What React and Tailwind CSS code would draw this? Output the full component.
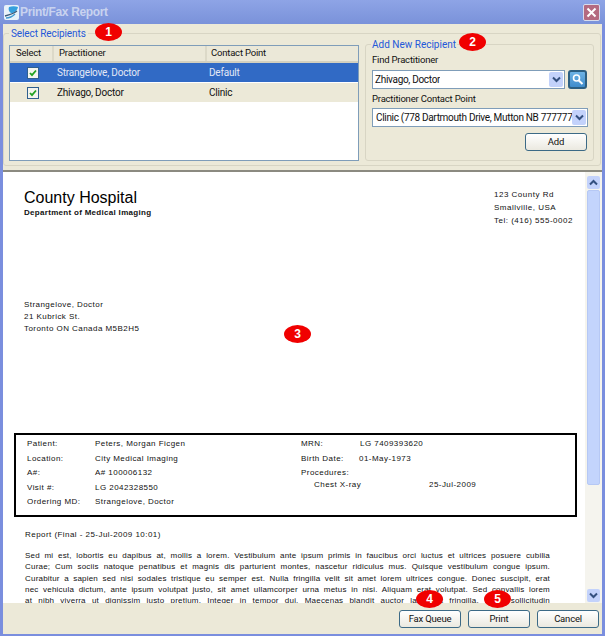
import React from 'react';

const Badge = ({ n, className }) => (
  <div className={`absolute w-[27px] h-[18px] rounded-[50%] bg-[#f00000] text-white text-[12px] font-bold flex items-center justify-center ${className}`}>
    {n}
  </div>
);

const Chevron = () => (
  <svg width="9" height="7" viewBox="0 0 9 7" fill="none">
    <path d="M1 1.5 L4.5 5 L8 1.5" stroke="#34507f" strokeWidth="2" />
  </svg>
);

const Combo = ({ text, className, textClass = 'tracking-[-0.3px]' }) => (
  <div className={`h-[19px] bg-white border border-[#7f9db9] flex items-center justify-between pl-[2px] pr-[1px] ${className}`}>
    <span className={`text-[10px] text-[#111] whitespace-nowrap overflow-hidden font-['Roboto',sans-serif] ${textClass}`}>{text}</span>
    <div className="w-[14px] h-[15px] shrink-0 rounded-[2px] bg-[#c3d2fb] flex items-center justify-center">
      <Chevron />
    </div>
  </div>
);

const XpButton = ({ label, className }) => (
  <button className={`h-[18px] rounded-[3px] border border-[#3c6a86] bg-gradient-to-b from-white to-[#ebe9e0] text-[9.5px] tracking-[-0.2px] text-[#111] font-['Roboto',sans-serif] ${className}`}>
    {label}
  </button>
);

const Check = () => (
  <div className="w-[12px] h-[12px] border border-[#2f5f8f] bg-[#f4f4ee] flex items-center justify-center">
    <svg width="8" height="8" viewBox="0 0 8 8" fill="none">
      <path d="M1 4 L3 6.2 L7 1.5" stroke="#21a121" strokeWidth="1.8" />
    </svg>
  </div>
);

const Row = ({ name, point, selected }) => (
  <div className={`h-[19px] flex items-center text-[10px] tracking-[-0.2px] ${selected ? 'bg-[#316ac5] text-[#e3e8f5]' : 'bg-[#ece9d8] text-[#111]'}`}>
    <div className="w-[47px] pl-[17px]"><Check /></div>
    <div className="w-[152px]">{name}</div>
    <div>{point}</div>
  </div>
);

const Field = ({ label, value, valueClass = 'w-[68px]' }) => (
  <div className="h-[14.5px] flex items-center">
    <span className={valueClass}>{label}</span>
    <span>{value}</span>
  </div>
);

const bodyLines = [
  'Sed mi est, lobortis eu dapibus at, mollis a lorem. Vestibulum ante ipsum primis in faucibus orci luctus et ultrices posuere cubilia',
  'Curae; Cum sociis natoque penatibus et magnis dis parturient montes, nascetur ridiculus mus. Quisque vestibulum congue ipsum.',
  'Curabitur a sapien sed nisi sodales tristique eu semper est. Nulla fringilla velit sit amet lorem ultrices congue. Donec suscipit, erat',
  'nec vehicula dictum, ante ipsum volutpat justo, sit amet ullamcorper urna metus in nisi. Aliquam erat volutpat. Sed convallis lorem',
  'at nibh viverra ut dignissim justo pretium. Integer in tempor dui. Maecenas blandit auctor lacus at fringilla. Nunc sollicitudin',
];

export default function App() {
  return (
    <div className="relative w-[605px] h-[636px] overflow-hidden flex flex-col bg-[#7a8ede] font-['Liberation_Sans',sans-serif]">
      {/* title bar */}
      <div className="h-[24px] shrink-0 bg-gradient-to-b from-[#8ea4e6] to-[#7a92da] flex items-center pl-[4px] pr-[5px]">
        <svg width="15" height="15" viewBox="0 0 15 15">
          <rect width="15" height="15" rx="2" fill="#e8f2fa" />
          <path d="M5 2 C8 1 11 1 14 2 C13 6 10 8 7 8 C5 7 4 4 5 2 Z" fill="#35a0dd" />
          <path d="M1 11 C5 10 9 9 13 6" stroke="#3c5a78" strokeWidth="1.4" fill="none" />
          <path d="M2 13 C6 13 9 11 11 9" stroke="#3f9ad0" strokeWidth="1.4" fill="none" />
        </svg>
        <span className="ml-[1px] text-[12px] font-bold text-[#c9d3ef] tracking-[-0.35px]">Print/Fax Report</span>
        <div className="ml-auto w-[17px] h-[17px] rounded-[2px] border border-[#d8dcec] bg-[#b46a80] flex items-center justify-center">
          <svg width="11" height="11" viewBox="0 0 11 11">
            <path d="M1.5 1.5 L9.5 9.5 M9.5 1.5 L1.5 9.5" stroke="#fff" strokeWidth="2" />
          </svg>
        </div>
      </div>

      <div className="flex-1 min-h-0 mx-[3px] mb-[2px] flex flex-col bg-[#ece9d8]">
        {/* recipients */}
        <div className="h-[148px] shrink-0 pt-[9px] border-b-2 border-[#8b8a80] font-['Roboto',sans-serif]">
          <div className="relative h-[133px] mr-[1px] border border-[#d8d5c4] rounded-[3px] flex pl-[5px] pt-[11px] pr-[6px]">
            <span className="absolute left-[5px] top-[-7px] px-[2px] bg-[#ece9d8] text-[10px] leading-[13px] tracking-[-0.1px] text-[#2458d8]">Select Recipients</span>

            <div className="w-[350px] h-[116px] border border-[#7f9db9] bg-white">
              <div className="h-[17px] flex items-center text-[9.5px] tracking-[-0.2px] text-[#111] bg-[#ebe8d8] border-b-2 border-[#d3d0bf]">
                <div className="w-[44px] pl-[6px] border-r-2 border-[#dcd9c8]">Select</div>
                <div className="w-[153px] pl-[5px] border-r-2 border-[#dcd9c8]">Practitioner</div>
                <div className="pl-[4px]">Contact Point</div>
              </div>
              <Row name="Strangelove, Doctor" point="Default" selected />
              <div className="h-[1px]" />
              <Row name="Zhivago, Doctor" point="Clinic" />
            </div>

            <div className="relative ml-[6px] mt-[-1px] w-[229px] h-[117px] border border-[#d8d5c4] rounded-[3px] px-[6px] pt-[8px]">
              <span className="absolute left-[5px] top-[-7px] px-[1px] bg-[#ece9d8] text-[10px] leading-[14px] text-[#2458d8]">Add New Recipient</span>
              <div className="text-[9.5px] tracking-[-0.2px] leading-[14px] text-[#111]">Find Practitioner</div>
              <div className="mt-[3px] flex items-center gap-[3px]">
                <Combo text="Zhivago, Doctor" className="w-[194px]" />
                <div className="w-[19px] h-[19px] rounded-[3px] border-2 border-[#2c5f82] bg-gradient-to-b from-[#6db3e6] to-[#3f8ccb] flex items-center justify-center">
                  <svg width="13" height="13" viewBox="0 0 13 13" fill="none">
                    <circle cx="5.5" cy="5" r="3" stroke="#fff" strokeWidth="1.6" />
                    <path d="M7.8 7.5 L11.5 11" stroke="#fff" strokeWidth="2" />
                  </svg>
                </div>
              </div>
              <div className="mt-[3px] text-[9.5px] tracking-[-0.2px] leading-[14px] text-[#111]">Practitioner Contact Point</div>
              <Combo text="Clinic (778 Dartmouth Drive, Mutton NB 777777" textClass="tracking-[-0.32px]" className="mt-[2px] w-[216px] pl-[3px]" />
              <div className="mt-[6px] flex justify-end">
                <XpButton label="Add" className="w-[62px]" />
              </div>
            </div>
          </div>
        </div>

        {/* report and scrollbar */}
        <div className="flex-1 min-h-0 flex bg-white">
          <div className="flex-1 min-w-0 overflow-hidden pl-[11px] pr-[7px] pt-[15px] text-[8px] text-[#111] tracking-[0.45px]">
            <div className="flex justify-between pl-[10px] pr-[3px]">
              <div className="pt-[1px]">
                <div className="text-[16px] leading-[20px] tracking-normal text-black">County Hospital</div>
                <div className="font-bold leading-[10px] tracking-[0.3px]">Department of Medical Imaging</div>
              </div>
              <div className="leading-[13px] pt-[1px] w-[81px] tracking-[0.5px]">
                <div>123 County Rd</div>
                <div>Smallville, USA</div>
                <div>Tel: (416) 555-0002</div>
              </div>
            </div>

            <div className="mt-[72px] ml-[10px] leading-[12px]">
              <div>Strangelove, Doctor</div>
              <div>21 Kubrick St.</div>
              <div>Toronto ON Canada M5B2H5</div>
            </div>

            <div className="mt-[98px] h-[84px] w-[563px] border-2 border-black flex pl-[11px] pt-[2px]">
              <div className="w-[274px]">
                <Field label="Patient:" value="Peters, Morgan Ficgen" />
                <Field label="Location:" value="City Medical Imaging" />
                <Field label="A#:" value="A# 100006132" />
                <Field label="Visit #:" value="LG 2042328550" />
                <Field label="Ordering MD:" value="Strangelove, Doctor" />
              </div>
              <div>
                <Field label="MRN:" value="LG 7409393620" valueClass="w-[59px]" />
                <Field label="Birth Date:" value="01-May-1973" valueClass="w-[58px]" />
                <Field label="Procedures:" value="" />
                <div className="h-[12px] -mt-[2px] flex items-center pl-[13px]">
                  <span className="w-[115px]">Chest X-ray</span>
                  <span>25-Jul-2009</span>
                </div>
              </div>
            </div>

            <div className="mt-[12px] ml-[11px] leading-[12px]">Report (Final - 25-Jul-2009 10:01)</div>

            <div className="mt-[9px] ml-[11px] w-[525px]">
              {bodyLines.map((line) => (
                <div key={line} className="h-[11.3px] leading-[11.3px] whitespace-nowrap [text-align-last:justify] tracking-[0.2px] font-medium">{line}</div>
              ))}
            </div>
          </div>

          <div className="w-[17px] shrink-0 bg-[#f5f4ee] flex flex-col items-center pt-[4px] pb-[1px]">
            <div className="w-[13px] h-[13px] rounded-[2px] bg-[#c3d2fb] flex items-center justify-center rotate-180"><Chevron /></div>
            <div className="mt-[1px] w-[13px] h-[295px] rounded-[2px] bg-[#c3d4fc] border border-[#b6c8f4]" />
            <div className="mt-auto w-[13px] h-[13px] rounded-[2px] bg-[#c3d2fb] flex items-center justify-center"><Chevron /></div>
          </div>
        </div>

        {/* buttons */}
        <div className="h-[31px] shrink-0 flex items-start justify-end gap-[7px] pt-[7px] pr-[3px]">
          <XpButton label="Fax Queue" className="w-[62px]" />
          <XpButton label="Print" className="w-[62px]" />
          <XpButton label="Cancel" className="w-[62px]" />
        </div>
      </div>

      <Badge n="1" className="left-[95px] top-[23px]" />
      <Badge n="2" className="left-[459px] top-[33px]" />
      <Badge n="3" className="left-[284px] top-[325px]" />
      <Badge n="4" className="left-[416px] top-[590px]" />
      <Badge n="5" className="left-[484px] top-[590px]" />
    </div>
  );
}
